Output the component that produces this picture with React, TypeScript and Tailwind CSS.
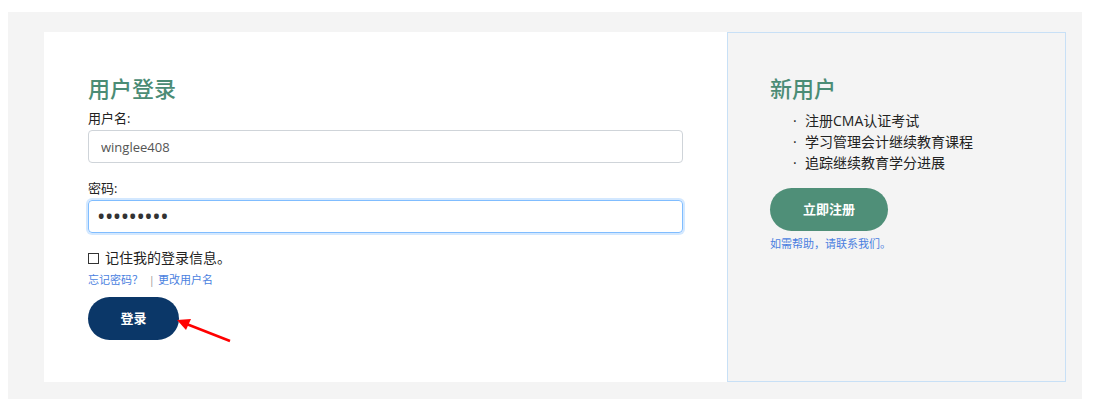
import React from "react";

const App: React.FC = () => {
  return (
    <div
      className="w-[1097px] h-[409px] bg-white pt-[12px] pl-[8px]"
      style={{ fontFamily: '"Open Sans", "Noto Sans CJK SC", sans-serif' }}
    >
      <div className="w-[1074px] h-[387px] bg-[#f4f4f4] pt-[20px] pl-[36px]">
        <div className="flex h-[350px]">
          {/* Login */}
          <div className="relative w-[683px] bg-white pl-[44px] pt-[41px] pr-[44px]">
            <h1 className="text-[22px] leading-[30px] font-medium text-[#4b8c75]">用户登录</h1>
            <label className="block mt-[6px] text-[13px] leading-[18px] text-[#222]">用户名:</label>
            <input
              readOnly
              value="winglee408"
              className="mt-[3px] w-[595px] h-[33px] border border-[#cfd4d9] rounded-[4px] px-[12px] text-[13px] text-[#555] outline-none"
            />
            <label className="block mt-[16px] text-[13px] leading-[18px] text-[#222]">密码:</label>
            <input
              readOnly
              type="password"
              value="winglee40"
              className="mt-[3px] w-[595px] h-[33px] border border-[#80bdff] rounded-[4px] px-[9px] text-[17px] font-bold text-[#333] shadow-[0_0_0_2px_rgba(128,189,255,0.35)] outline-none tracking-[1.5px]"
            />
            <div className="mt-[16px] flex items-center text-[14px] leading-[18px] text-[#222]">
              <span className="inline-block w-[11px] h-[11px] border border-[#333] mr-[6px]" />
              记住我的登录信息。
            </div>
            <div className="mt-[6px] text-[11px] leading-[14px] text-[#4a7fe0]">
              忘记密码？ <span className="text-[#999] mx-[3px]">|</span>更改用户名
            </div>
            <button className="mt-[10px] w-[91px] h-[43px] rounded-full bg-[#0b3768] text-white text-[13px] font-bold">
              登录
            </button>
            <svg className="absolute left-[130px] top-[285px]" width="60" height="30" viewBox="0 0 60 30">
              <line x1="56" y1="24" x2="10" y2="6" stroke="#ff0000" strokeWidth="2.5" />
              <polygon points="3,3 17,2 12,13" fill="#ff0000" />
            </svg>
          </div>
          {/* New user */}
          <div className="w-[339px] bg-[#f4f4f4] border border-[#c8e0f6] pl-[42px] pt-[40px]">
            <h2 className="text-[22px] leading-[30px] font-medium text-[#4b8c75]">新用户</h2>
            <ul className="mt-[7px] pl-[23px] text-[14px] leading-[21px] text-[#222]">
              <li className="flex"><span className="w-[12px]">·</span>注册CMA认证考试</li>
              <li className="flex"><span className="w-[12px]">·</span>学习管理会计继续教育课程</li>
              <li className="flex"><span className="w-[12px]">·</span>追踪继续教育学分进展</li>
            </ul>
            <button className="mt-[15px] w-[118px] h-[43px] rounded-full bg-[#4f8f78] text-white text-[13px] font-bold">
              立即注册
            </button>
            <div className="mt-[6px] text-[11px] leading-[14px] text-[#4a7fe0]">如需帮助，请联系我们。</div>
          </div>
        </div>
      </div>
    </div>
  );
};

export default App;
